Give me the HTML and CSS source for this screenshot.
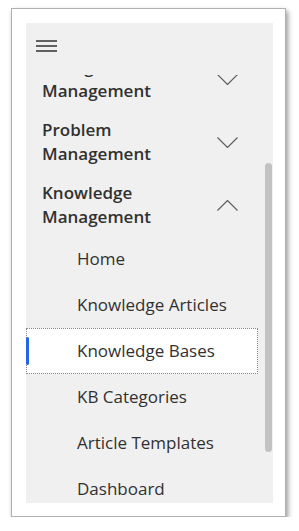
FILE: index.html
```html
<!doctype html>
<html lang="en">

<head>
    <meta charset="utf-8">
    <meta name="viewport" content="width=device-width, initial-scale=1">
    <title>Navigation</title>
    <link rel="stylesheet" href="styles.css">
</head>

<body>
<div class="frame">
    <nav class="sitemap">
        <div class="sitemap-header">
            <button class="hamburger" aria-label="Menu">
                <svg width="21" height="12" viewBox="0 0 21 12">
                    <path d="M0 1h21M0 6h21M0 11h21" stroke="#323130" stroke-width="1.4"/>
                </svg>
            </button>
        </div>
        <div class="sitemap-body">
            <div class="sitemap-scroll" id="sitemap-scroll">
                <ul class="groups">
                    <li class="group single">
                        <span class="group-title">Service Desk</span>
                        <svg class="chevron" width="21" height="11" viewBox="0 0 21 11"><polyline points="0.5,0.5 10.5,10.5 20.5,0.5"/></svg>
                    </li>
                    <li class="group single">
                        <span class="group-title">Dashboards</span>
                        <svg class="chevron" width="21" height="11" viewBox="0 0 21 11"><polyline points="0.5,0.5 10.5,10.5 20.5,0.5"/></svg>
                    </li>
                    <li class="group">
                        <span class="group-title">Change<br>Management</span>
                        <svg class="chevron" width="21" height="11" viewBox="0 0 21 11"><polyline points="0.5,0.5 10.5,10.5 20.5,0.5"/></svg>
                    </li>
                    <li class="group">
                        <span class="group-title">Problem<br>Management</span>
                        <svg class="chevron" width="21" height="11" viewBox="0 0 21 11"><polyline points="0.5,0.5 10.5,10.5 20.5,0.5"/></svg>
                    </li>
                    <li class="group open">
                        <span class="group-title">Knowledge<br>Management</span>
                        <svg class="chevron" width="21" height="11" viewBox="0 0 21 11"><polyline points="0.5,10.5 10.5,0.5 20.5,10.5"/></svg>
                    </li>
                    <li class="sub-item">Home</li>
                    <li class="sub-item">Knowledge Articles</li>
                    <li class="sub-item selected">Knowledge Bases</li>
                    <li class="sub-item">KB Categories</li>
                    <li class="sub-item">Article Templates</li>
                    <li class="sub-item">Dashboard</li>
                    <li class="group">
                        <span class="group-title">Asset<br>Management</span>
                        <svg class="chevron" width="21" height="11" viewBox="0 0 21 11"><polyline points="0.5,0.5 10.5,10.5 20.5,0.5"/></svg>
                    </li>
                </ul>
            </div>
            <div class="scrollbar" id="scrollbar">
                <div class="scrollbar-thumb" id="scrollbar-thumb"></div>
            </div>
        </div>
    </nav>
</div>
<script>
    let scroller = document.getElementById('sitemap-scroll');
    let track = document.getElementById('scrollbar');
    let thumb = document.getElementById('scrollbar-thumb');

    // a lista a "Change Management" csoportig van görgetve
    scroller.scrollTop = 130;

    // a csúszka méretét és helyét a görgetésből számoljuk
    let updateThumb = () => {
        let ratio = track.clientHeight / scroller.scrollHeight;
        thumb.style.height = (scroller.clientHeight * ratio) + 'px';
        thumb.style.marginTop = (scroller.scrollTop * ratio) + 'px';
    }
    updateThumb();
    scroller.addEventListener('scroll', updateThumb);
</script>
</body>

</html>
```

FILE: styles.css
```css
body {
    margin: 0;
    background-color: #fff;
    font-family: "Open Sans", "Noto Sans", sans-serif;
    color: #323130;
}

.frame {
    margin: 8px 0 0 11px;
    width: 247px;
    height: 480px;
    padding: 14px 12px 13px 14px;
    background-color: #fff;
    border: 1px solid #b0b0b0;
    box-shadow: 2px 3px 5px rgba(0, 0, 0, 0.4);
}

.sitemap {
    height: 100%;
    display: flex;
    flex-direction: column;
    background-color: #f0f0f0;
}

.sitemap-header {
    height: 52px;
    flex-shrink: 0;
    padding-left: 10px;
    box-sizing: border-box;
    padding-top: 17px;
}

.hamburger {
    border: 0;
    padding: 0;
    margin: 0;
    background: none;
    display: block;
    line-height: 0;
}

.sitemap-body {
    flex: 1;
    min-height: 0;
    display: flex;
}

.sitemap-scroll {
    flex: 1;
    overflow: hidden;
}

.scrollbar {
    width: 8px;
    flex-shrink: 0;
}

.scrollbar-thumb {
    width: 7px;
    border-radius: 4px;
    background-color: #c2c2c2;
}

.groups {
    list-style: none;
    margin: 0 7px 0 0;
    padding: 10px 0 3px 0;
}

.group {
    height: 48px;
    padding: 8px 20px 7px 16px;
    display: flex;
    align-items: center;
    justify-content: space-between;
    font-size: 17px;
    font-weight: 600;
    line-height: 24px;
}

.group.single {
    height: 24px;
    padding-top: 11px;
    padding-bottom: 11px;
}

.chevron {
    flex-shrink: 0;
    fill: none;
    stroke: #605e5c;
    stroke-width: 1.2;
}

.sub-item {
    position: relative;
    height: 24px;
    padding: 11px 20px 11px 51px;
    font-size: 17px;
    line-height: 24px;
}

/* kijelölt elem: fehér háttér, pontozott keret, kék jelző */
.sub-item.selected {
    background-color: #fff;
    outline: 1px dotted #8a8886;
    outline-offset: -1px;
}

.sub-item.selected::before {
    content: "";
    position: absolute;
    left: 0;
    top: 9px;
    width: 3px;
    height: 28px;
    border-radius: 2px;
    background-color: #2266e3;
}
```
